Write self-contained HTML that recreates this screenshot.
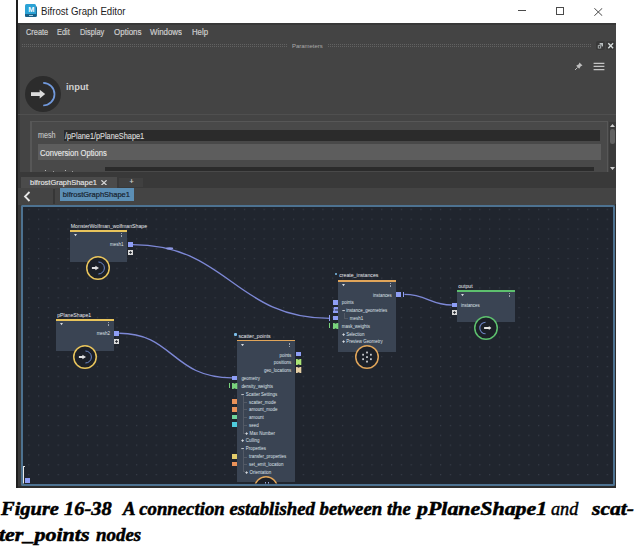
<!DOCTYPE html>
<html><head><meta charset="utf-8">
<style>
*{margin:0;padding:0;box-sizing:border-box}
html,body{width:635px;height:552px;overflow:hidden;background:#fff}
body{position:relative;font-family:"Liberation Sans",sans-serif}
.a{position:absolute}
.t{position:absolute;white-space:nowrap;line-height:1}
#win{position:absolute;left:16px;top:0;width:600px;height:488px;background:#1e1e1e}
#title{position:absolute;left:18px;top:0;width:598px;height:23px;background:#fff}
#body{position:absolute;left:18px;top:23px;width:598px;height:465px;background:#444}
.menu{color:#cdcdcd;font-size:8.4px;top:27.9px;transform:scaleX(0.88);transform-origin:0 0;-webkit-text-stroke:0.2px #cdcdcd}
.cap{font-family:"Liberation Serif",serif;font-weight:bold;font-style:italic;font-size:18px;color:#000;transform-origin:0 0;-webkit-text-stroke:0.5px #000}
</style></head><body>
<div id="win"></div>
<div id="title"></div>
<div id="body"></div>

<div class="a" style="left:18px;top:23px;width:598px;height:2px;background:#383838"></div>
<div class="a" style="left:18px;top:23px;width:1.5px;height:465px;background:#393939"></div>
<!-- title bar -->
<div class="a" style="left:25.5px;top:5.5px;width:11.5px;height:11.5px;background:#1e6e98;border-radius:1.5px"></div>
<div class="a" style="left:24.7px;top:4.4px;width:11.3px;height:9.6px;background:#2ba2d5;border-radius:1.5px 1.5px 0 0"></div>
<div class="a" style="left:24.7px;top:13.6px;width:11.3px;height:3.6px;background:#186088;border-radius:0 0 1px 1px"></div>
<div class="a" style="left:28.8px;top:15.1px;width:4px;height:0.9px;background:#a6cde0"></div>
<div class="t" style="left:28.2px;top:5.6px;font-size:7.4px;font-weight:bold;color:#f4fbff">M</div>
<div class="t" style="left:40.8px;top:7.2px;font-size:10.2px;color:#222;transform:scaleX(0.945);transform-origin:0 0">Bifrost Graph Editor</div>
<div class="a" style="left:517.6px;top:10px;width:8px;height:1px;background:#4a4a4a"></div>
<div class="a" style="left:555.5px;top:7px;width:8px;height:8px;border:1px solid #4a4a4a"></div>
<svg class="a" style="left:593.5px;top:7.5px" width="9" height="8"><path d="M0.3 0.2L8.3 7.8M8.3 0.2L0.3 7.8" stroke="#4a4a4a" stroke-width="1"/></svg>

<!-- menu -->
<div class="t menu" style="left:25.5px">Create</div>
<div class="t menu" style="left:56.5px">Edit</div>
<div class="t menu" style="left:79.5px">Display</div>
<div class="t menu" style="left:113.5px;transform:scaleX(0.955)">Options</div>
<div class="t menu" style="left:150.2px;transform:scaleX(0.94)">Windows</div>
<div class="t menu" style="left:192px;transform:scaleX(0.93)">Help</div>


<!-- parameters header -->
<svg class="a" style="left:22px;top:44px" width="594" height="4">
 <defs><pattern id="dp" width="2" height="2" patternUnits="userSpaceOnUse"><rect width="1" height="1" fill="#626262"/></pattern></defs>
 <rect x="0" y="0" width="266" height="4" fill="url(#dp)"/>
 <rect x="306" y="0" width="263" height="4" fill="url(#dp)"/>
</svg>
<div class="t" style="left:292px;top:42.5px;font-size:6.2px;color:#aaaaaa;transform:scaleX(0.96);transform-origin:0 0">Parameters</div>
<div class="a" style="left:595.7px;top:40.5px;width:9px;height:9.5px;background:#393939;border-radius:2px"></div>
<div class="a" style="left:605.7px;top:40.5px;width:9.3px;height:9.5px;background:#393939;border-radius:2px"></div>
<svg class="a" style="left:595.7px;top:40.5px" width="9" height="9.5"><rect x="3.6" y="2" width="3.4" height="3.4" fill="#b9bfc0"/><rect x="1.6" y="4" width="3.6" height="3.8" fill="#c4cacb" stroke="#393939" stroke-width="0.6"/><rect x="2.6" y="5" width="1.6" height="1.8" fill="#393939"/></svg>
<svg class="a" style="left:605.7px;top:40.5px" width="9.3" height="9.5"><path d="M2.3 2.2L7.1 7.2M7.1 2.2L2.3 7.2" stroke="#d8dede" stroke-width="1.3"/></svg>
<!-- pin & hamburger -->
<svg class="a" style="left:574px;top:61.2px" width="10" height="10"><path d="M5.5 1.5L8.5 4.5L6.8 5.2L5.2 7.8L2.2 4.8L4.8 3.2Z" fill="#bdbdbd"/><path d="M3.5 6.5L1 9" stroke="#bdbdbd" stroke-width="1"/></svg>
<svg class="a" style="left:593px;top:60px" width="13" height="12"><path d="M0.6 3.4H11.4M0.6 6.4H11.4M0.6 9.7H11.4" stroke="#c4c4c4" stroke-width="1.3"/></svg>
<!-- input circle -->
<div class="a" style="left:25.1px;top:75.7px;width:36px;height:36px;border-radius:50%;background:#2c2c2c"></div>
<svg class="a" style="left:25.1px;top:75.7px" width="36" height="36">
 <path d="M18.2 6.9 A11.3 11.3 0 0 1 18.2 29.5" stroke="#7199dc" stroke-width="1.7" fill="none"/>
 <path d="M6 18.1H15.6" stroke="#dcdcdc" stroke-width="3.8"/><path d="M14.7 13.7L20.2 18.1L14.7 22.5Z" fill="#dcdcdc"/>
</svg>
<div class="t" style="left:66px;top:83px;font-size:9.3px;font-weight:bold;color:#d0d0d0">input</div>
<div class="a" style="left:18px;top:114.2px;width:598px;height:1px;background:#4f4f4f"></div>
<!-- attribute box -->
<div class="a" style="left:29.6px;top:121px;width:578.4px;height:51px;border:1px solid #575757;border-left-width:2px;border-bottom:none;background:#494949"></div>
<div class="t" style="left:37.7px;top:131.8px;font-size:8.2px;color:#c2c2c2;transform:scaleX(0.878);transform-origin:0 0;-webkit-text-stroke:0.15px #c2c2c2">mesh</div>
<div class="a" style="left:64px;top:129.5px;width:536px;height:11.5px;background:#2b2b2b"></div>
<div class="t" style="left:65.4px;top:131.9px;font-size:8.4px;color:#dadada;transform:scaleX(0.876);transform-origin:0 0;-webkit-text-stroke:0.15px #dadada">/pPlane1/pPlaneShape1</div>
<div class="a" style="left:37.5px;top:143.5px;width:563px;height:16.5px;background:#5d5d5d"></div>
<div class="t" style="left:39.6px;top:148.5px;font-size:8.5px;color:#e6e6e6;transform:scaleX(0.894);transform-origin:0 0;-webkit-text-stroke:0.15px #e6e6e6">Conversion Options</div>
<div class="a" style="left:104.6px;top:167.2px;width:489px;height:4.3px;background:#2b2b2b"></div><div class="a" style="left:45.3px;top:170.4px;width:1.2px;height:1.1px;background:#b8b8b8"></div><div class="a" style="left:53px;top:170.6px;width:1px;height:0.9px;background:#9a9a9a"></div><div class="a" style="left:65.2px;top:170.4px;width:1.2px;height:1.1px;background:#b8b8b8"></div><div class="a" style="left:72.3px;top:170.6px;width:1px;height:0.9px;background:#9a9a9a"></div>
<div class="a" style="left:608.5px;top:122px;width:7px;height:50px;background:#3a3a3a"></div>
<div class="a" style="left:609.5px;top:129px;width:5px;height:15px;background:#626262;border-radius:2.5px"></div>
<svg class="a" style="left:608.5px;top:122px" width="7" height="50"><path d="M1 5L3.5 2L6 5Z M1 45L3.5 48L6 45Z" fill="#cfcfcf"/></svg>
<!-- tab bar -->
<div class="a" style="left:18px;top:171.5px;width:598px;height:16px;background:#393939"></div>
<div class="a" style="left:21px;top:176.5px;width:96px;height:11px;background:#4b4b4b"></div>
<div class="t" style="left:29.5px;top:178.8px;font-size:7.8px;color:#e4e4e4;transform:scaleX(0.96);transform-origin:0 0;-webkit-text-stroke:0.15px #e4e4e4">bifrostGraphShape1</div>
<svg class="a" style="left:101.3px;top:179.9px" width="6" height="5.5"><path d="M0.4 0.3L5.6 5.2M5.6 0.3L0.4 5.2" stroke="#d8d8d8" stroke-width="1.2"/></svg>
<div class="a" style="left:119px;top:177.5px;width:24px;height:9.5px;background:#404040"></div>
<div class="t" style="left:129.6px;top:178.4px;font-size:7px;color:#d0d0d0;-webkit-text-stroke:0.2px #d0d0d0">+</div>
<!-- breadcrumb -->
<div class="a" style="left:18px;top:188px;width:598px;height:17px;background:#444"></div>
<svg class="a" style="left:23px;top:191px" width="8" height="11"><path d="M6.5 1L2 5.5L6.5 10" stroke="#e8e8e8" stroke-width="1.8" fill="none"/></svg>
<div class="a" style="left:53px;top:189px;width:1.5px;height:15px;background:#363636"></div>
<div class="a" style="left:60px;top:188.3px;width:74px;height:12.5px;background:#5c8fb5"></div>
<div class="t" style="left:62.8px;top:191.3px;font-size:7.5px;color:#17222e;-webkit-text-stroke:0.2px #17222e">bifrostGraphShape1</div>


<!-- graph -->
<div class="a" style="left:18px;top:204.5px;width:598px;height:283.2px;background:#393939"></div>
<div class="a" style="left:21px;top:205px;width:594px;height:281px;border:2px solid #4d7291;border-radius:2px;background:#20252e"></div>
<svg class="a" style="left:0;top:0" width="635" height="552">
 <defs><pattern id="gd" x="28.2" y="208.8" width="9.805" height="9.823" patternUnits="userSpaceOnUse"><rect width="1.2" height="1.2" fill="#363c48"/></pattern></defs>
 <rect x="22" y="206.5" width="591" height="277" fill="url(#gd)"/>
 <path d="M132.5 244.6 C227.5 244.6 235 318.4 330 318.4" stroke="#7d88d6" stroke-width="1.35" fill="none"/>
 <ellipse cx="169.6" cy="248.4" rx="3.6" ry="1.1" fill="#8d97e2"/>
 <path d="M119.3 333.2 C173.3 333.2 172 377.8 232 377.8" stroke="#7d88d6" stroke-width="1.35" fill="none"/>
 <path d="M404.4 294.4 C426.4 294.4 430.8 305 451.8 305" stroke="#7d88d6" stroke-width="1.4" fill="none"/>
</svg>


<div class="a" style="left:0;top:0;width:635px;height:552px;clip-path:inset(0 0 68.5px 0)">
<div class="t" style="left:70.80px;top:223.78px;font-size:5.2px;color:#e8eaee;">MonsterWolfman_wolfmanShape</div>
<div class="a" style="left:69.60px;top:229.90px;width:57.40px;height:1.70px;background:#e8c45c;"></div>
<div class="a" style="left:69.60px;top:231.60px;width:57.40px;height:30.70px;background:#3a4453;"></div>
<svg class="a" style="left:73.80px;top:234.30px" width="3" height="2.5"><path d="M0 0H3L1.5 2.3Z" fill="#d4d8de"/></svg>
<div class="a" style="left:121.10px;top:233.00px;width:1.10px;height:1.10px;background:#9ea4ad;"></div>
<div class="a" style="left:121.10px;top:234.60px;width:1.10px;height:1.10px;background:#9ea4ad;"></div>
<div class="a" style="left:121.10px;top:236.20px;width:1.10px;height:1.10px;background:#9ea4ad;"></div>
<div class="t" style="right:511.60px;top:243.42px;font-size:4.45px;color:#dfe3ea;">mesh1</div>
<div class="a" style="left:127.70px;top:242.10px;width:5.00px;height:4.80px;background:#8e9ef5;"></div>
<svg class="a" style="left:127.90px;top:249.80px" width="5" height="5"><rect x="0" y="0" width="5" height="5" fill="#d9d9d9"/><path d="M2.5 1.2V3.8M1.2 2.5H3.8" stroke="#262a31" stroke-width="1.1"/></svg>
<svg class="a" style="left:85.40px;top:255.00px" width="26.00" height="26.00" viewBox="-13 -13 26 26"><circle cx="0" cy="0" r="11.25" fill="#1c2028" stroke="#e8c45c" stroke-width="1.5"/><path d="M0.4 -6A6 6 0 0 1 0.4 6" stroke="#6a86c8" stroke-width="1" fill="none"/><path d="M-6.1 0H-2" stroke="#e0e0e0" stroke-width="1.9"/><path d="M-2.6 -2.3L1 0L-2.6 2.3Z" fill="#e0e0e0"/></svg>
<div class="t" style="left:57.20px;top:313.08px;font-size:5.2px;color:#e8eaee;">pPlaneShape1</div>
<div class="a" style="left:56.00px;top:318.90px;width:57.50px;height:1.70px;background:#e8c45c;"></div>
<div class="a" style="left:56.00px;top:320.60px;width:57.50px;height:30.40px;background:#3a4453;"></div>
<svg class="a" style="left:60.20px;top:323.30px" width="3" height="2.5"><path d="M0 0H3L1.5 2.3Z" fill="#d4d8de"/></svg>
<div class="a" style="left:107.60px;top:322.00px;width:1.10px;height:1.10px;background:#9ea4ad;"></div>
<div class="a" style="left:107.60px;top:323.60px;width:1.10px;height:1.10px;background:#9ea4ad;"></div>
<div class="a" style="left:107.60px;top:325.20px;width:1.10px;height:1.10px;background:#9ea4ad;"></div>
<div class="t" style="right:525.00px;top:332.32px;font-size:4.45px;color:#dfe3ea;">mesh2</div>
<div class="a" style="left:114.20px;top:331.00px;width:5.00px;height:4.80px;background:#8e9ef5;"></div>
<svg class="a" style="left:114.30px;top:338.80px" width="5" height="5"><rect x="0" y="0" width="5" height="5" fill="#d9d9d9"/><path d="M2.5 1.2V3.8M1.2 2.5H3.8" stroke="#262a31" stroke-width="1.1"/></svg>
<svg class="a" style="left:71.80px;top:343.70px" width="26.00" height="26.00" viewBox="-13 -13 26 26"><circle cx="0" cy="0" r="11.25" fill="#1c2028" stroke="#e8c45c" stroke-width="1.5"/><path d="M0.4 -6A6 6 0 0 1 0.4 6" stroke="#6a86c8" stroke-width="1" fill="none"/><path d="M-6.1 0H-2" stroke="#e0e0e0" stroke-width="1.9"/><path d="M-2.6 -2.3L1 0L-2.6 2.3Z" fill="#e0e0e0"/></svg>
<div class="a" style="left:335.20px;top:272.90px;width:2.2px;height:2.2px;border-radius:50%;background:#7cc0ec"></div>
<div class="t" style="left:339.20px;top:273.28px;font-size:5.2px;color:#e8eaee;">create_instances</div>
<div class="a" style="left:338.00px;top:279.90px;width:57.70px;height:1.70px;background:#e0a55a;"></div>
<div class="a" style="left:338.00px;top:281.60px;width:57.70px;height:70.10px;background:#3a4453;"></div>
<svg class="a" style="left:342.20px;top:284.30px" width="3" height="2.5"><path d="M0 0H3L1.5 2.3Z" fill="#d4d8de"/></svg>
<div class="a" style="left:389.80px;top:283.00px;width:1.10px;height:1.10px;background:#9ea4ad;"></div>
<div class="a" style="left:389.80px;top:284.60px;width:1.10px;height:1.10px;background:#9ea4ad;"></div>
<div class="a" style="left:389.80px;top:286.20px;width:1.10px;height:1.10px;background:#9ea4ad;"></div>
<div class="t" style="right:243.20px;top:293.52px;font-size:4.45px;color:#dfe3ea;">instances</div>
<div class="a" style="left:396.20px;top:292.30px;width:5.00px;height:4.80px;background:#8e9ef5;"></div>
<div class="a" style="left:403.30px;top:292.30px;width:0.90px;height:4.80px;background:#8e9ef5;"></div>
<div class="t" style="left:341.80px;top:301.12px;font-size:4.45px;color:#dfe3ea;">points</div>
<div class="a" style="left:332.60px;top:299.90px;width:5.00px;height:4.80px;background:#8e9ef5;"></div>
<svg class="a" style="left:341.80px;top:309.15px" width="3.2" height="3.2"><path d="M0.3 1.6H2.9" stroke="#d6dae0" stroke-width="0.9"/></svg>
<div class="t" style="left:346.20px;top:309.12px;font-size:4.45px;color:#dfe3ea;">instance_geometries</div>
<svg class="a" style="left:332.60px;top:307.10px" width="6" height="6"><path d="M1 0H5V2.4H1.8V3.6H5V6H0V3.6H1V2.4H0Z" fill="#8e9ef5"/></svg>
<div class="a" style="left:344.00px;top:312.50px;width:0.50px;height:6.00px;background:#535a66;"></div>
<div class="a" style="left:344.00px;top:318.00px;width:3.50px;height:0.50px;background:#535a66;"></div>
<div class="t" style="left:349.80px;top:316.92px;font-size:4.45px;color:#dfe3ea;">mesh1</div>
<div class="a" style="left:332.60px;top:315.60px;width:5.00px;height:4.80px;background:#8e9ef5;"></div>
<div class="a" style="left:329.40px;top:315.40px;width:0.90px;height:5.20px;background:#8e9ef5;"></div>
<div class="t" style="left:341.80px;top:324.82px;font-size:4.45px;color:#dfe3ea;">mask_weights</div>
<svg class="a" style="left:332.60px;top:322.60px" width="6" height="6.2"><path d="M0 0H1.2L2.6 0.8L4 0H5.3V6H4L2.6 5.2L1.2 6H0Z" fill="#79d27c"/></svg>
<div class="a" style="left:329.40px;top:322.80px;width:0.90px;height:5.40px;background:#79d27c;"></div>
<svg class="a" style="left:341.80px;top:332.65px" width="3.2" height="3.2"><path d="M1.6 0.3V2.9M0.3 1.6H2.9" stroke="#d6dae0" stroke-width="0.9"/></svg>
<div class="t" style="left:346.20px;top:332.62px;font-size:4.45px;color:#dfe3ea;">Selection</div>
<svg class="a" style="left:341.80px;top:340.15px" width="3.2" height="3.2"><path d="M1.6 0.3V2.9M0.3 1.6H2.9" stroke="#d6dae0" stroke-width="0.9"/></svg>
<div class="t" style="left:346.20px;top:340.12px;font-size:4.45px;color:#dfe3ea;">Preview Geometry</div>
<svg class="a" style="left:353.80px;top:344.40px" width="26.00" height="26.00" viewBox="-13 -13 26 26"><circle cx="0" cy="0" r="11.25" fill="#1c2028" stroke="#e0a55a" stroke-width="1.5"/><rect x="-0.90" y="-5.40" width="1.8" height="1.8" fill="#c6c8cc"/><rect x="-4.80" y="-3.20" width="1.8" height="1.8" fill="#c6c8cc"/><rect x="3.00" y="-3.20" width="1.8" height="1.8" fill="#c6c8cc"/><rect x="-0.90" y="-0.80" width="1.8" height="1.8" fill="#c6c8cc"/><rect x="-4.80" y="1.30" width="1.8" height="1.8" fill="#c6c8cc"/><rect x="3.00" y="1.30" width="1.8" height="1.8" fill="#c6c8cc"/><rect x="-0.90" y="3.70" width="1.8" height="1.8" fill="#c6c8cc"/></svg>
<div class="t" style="left:458.20px;top:283.78px;font-size:5.2px;color:#e8eaee;">output</div>
<div class="a" style="left:457.00px;top:289.90px;width:57.80px;height:1.70px;background:#5dc06e;"></div>
<div class="a" style="left:457.00px;top:291.60px;width:57.80px;height:30.90px;background:#3a4453;"></div>
<svg class="a" style="left:461.20px;top:294.30px" width="3" height="2.5"><path d="M0 0H3L1.5 2.3Z" fill="#d4d8de"/></svg>
<div class="a" style="left:508.90px;top:293.00px;width:1.10px;height:1.10px;background:#9ea4ad;"></div>
<div class="a" style="left:508.90px;top:294.60px;width:1.10px;height:1.10px;background:#9ea4ad;"></div>
<div class="a" style="left:508.90px;top:296.20px;width:1.10px;height:1.10px;background:#9ea4ad;"></div>
<div class="t" style="left:461.00px;top:304.02px;font-size:4.45px;color:#dfe3ea;">instances</div>
<div class="a" style="left:451.80px;top:302.60px;width:5.00px;height:4.80px;background:#8e9ef5;"></div>
<svg class="a" style="left:451.90px;top:310.20px" width="5" height="5"><rect x="0" y="0" width="5" height="5" fill="#d9d9d9"/><path d="M2.5 1.2V3.8M1.2 2.5H3.8" stroke="#262a31" stroke-width="1.1"/></svg>
<svg class="a" style="left:472.90px;top:315.45px" width="26.00" height="26.00" viewBox="-13 -13 26 26"><circle cx="0" cy="0" r="11.25" fill="#1c2028" stroke="#5dc06e" stroke-width="1.5"/><path d="M-0.4 -5.8A5.8 5.8 0 0 0 -0.4 5.8" stroke="#6a80c0" stroke-width="1.1" fill="none"/><path d="M-1.9 0H3.2" stroke="#e4e4e4" stroke-width="2"/><path d="M2.8 -2L5.4 0L2.8 2Z" fill="#e4e4e4"/></svg>
<div class="a" style="left:234.40px;top:333.40px;width:2.2px;height:2.2px;border-radius:50%;background:#7cc0ec"></div>
<div class="t" style="left:238.40px;top:333.78px;font-size:5.2px;color:#e8eaee;">scatter_points</div>
<div class="a" style="left:237.20px;top:339.50px;width:57.70px;height:1.70px;background:#e0a55a;"></div>
<div class="a" style="left:237.20px;top:341.20px;width:57.70px;height:140.40px;background:#3a4453;"></div>
<svg class="a" style="left:241.40px;top:343.90px" width="3" height="2.5"><path d="M0 0H3L1.5 2.3Z" fill="#d4d8de"/></svg>
<div class="a" style="left:289.00px;top:342.60px;width:1.10px;height:1.10px;background:#9ea4ad;"></div>
<div class="a" style="left:289.00px;top:344.20px;width:1.10px;height:1.10px;background:#9ea4ad;"></div>
<div class="a" style="left:289.00px;top:345.80px;width:1.10px;height:1.10px;background:#9ea4ad;"></div>
<div class="t" style="right:343.70px;top:353.72px;font-size:4.45px;color:#dfe3ea;">points</div>
<div class="a" style="left:295.90px;top:351.60px;width:5.00px;height:4.80px;background:#8e9ef5;"></div>
<div class="t" style="right:343.70px;top:361.42px;font-size:4.45px;color:#dfe3ea;">positions</div>
<svg class="a" style="left:295.50px;top:358.90px" width="6" height="6.2"><path d="M0 0H1.2L2.6 0.8L4 0H5.3V6H4L2.6 5.2L1.2 6H0Z" fill="#a9e475"/></svg>
<div class="t" style="right:343.70px;top:369.12px;font-size:4.45px;color:#dfe3ea;">geo_locations</div>
<svg class="a" style="left:295.50px;top:366.90px" width="6" height="6.2"><path d="M0 0H1.2L2.6 0.8L4 0H5.3V6H4L2.6 5.2L1.2 6H0Z" fill="#e6cfa4"/></svg>
<div class="t" style="left:241.40px;top:376.72px;font-size:4.45px;color:#dfe3ea;">geometry</div>
<div class="a" style="left:231.90px;top:375.50px;width:5.00px;height:4.80px;background:#8e9ef5;"></div>
<div class="t" style="left:241.40px;top:384.92px;font-size:4.45px;color:#dfe3ea;">density_weights</div>
<svg class="a" style="left:231.90px;top:382.90px" width="6" height="6.2"><path d="M0 0H1.2L2.6 0.8L4 0H5.3V6H4L2.6 5.2L1.2 6H0Z" fill="#79d27c"/></svg>
<div class="a" style="left:229.00px;top:383.10px;width:0.90px;height:5.40px;background:#79d27c;"></div>
<svg class="a" style="left:241.40px;top:392.55px" width="3.2" height="3.2"><path d="M0.3 1.6H2.9" stroke="#d6dae0" stroke-width="0.9"/></svg>
<div class="t" style="left:245.80px;top:392.52px;font-size:4.45px;color:#dfe3ea;">Scatter Settings</div>
<div class="a" style="left:243.30px;top:395.80px;width:0.60px;height:37.20px;background:#535a66;"></div>
<div class="a" style="left:243.30px;top:449.80px;width:0.60px;height:21.60px;background:#535a66;"></div>
<div class="a" style="left:243.30px;top:433.00px;width:2.00px;height:0.60px;background:#535a66;"></div>
<div class="a" style="left:243.30px;top:471.30px;width:2.00px;height:0.60px;background:#535a66;"></div>
<div class="a" style="left:243.30px;top:401.80px;width:3.50px;height:0.60px;background:#535a66;"></div>
<div class="t" style="left:249.00px;top:400.52px;font-size:4.45px;color:#dfe3ea;">scatter_mode</div>
<div class="a" style="left:231.90px;top:399.30px;width:5.00px;height:4.80px;background:#ea9259;"></div>
<div class="a" style="left:243.30px;top:409.40px;width:3.50px;height:0.60px;background:#535a66;"></div>
<div class="t" style="left:249.00px;top:408.12px;font-size:4.45px;color:#dfe3ea;">amount_mode</div>
<div class="a" style="left:231.90px;top:406.90px;width:5.00px;height:4.80px;background:#ea9259;"></div>
<div class="a" style="left:243.30px;top:417.20px;width:3.50px;height:0.60px;background:#535a66;"></div>
<div class="t" style="left:249.00px;top:415.92px;font-size:4.45px;color:#dfe3ea;">amount</div>
<div class="a" style="left:231.90px;top:414.70px;width:5.00px;height:4.80px;background:#6ed39b;"></div>
<div class="a" style="left:243.30px;top:424.90px;width:3.50px;height:0.60px;background:#535a66;"></div>
<div class="t" style="left:249.00px;top:423.62px;font-size:4.45px;color:#dfe3ea;">seed</div>
<div class="a" style="left:231.90px;top:422.40px;width:5.00px;height:4.80px;background:#4fcbdc;"></div>
<svg class="a" style="left:245.20px;top:431.75px" width="3.2" height="3.2"><path d="M1.6 0.3V2.9M0.3 1.6H2.9" stroke="#d6dae0" stroke-width="0.9"/></svg>
<div class="t" style="left:249.60px;top:431.72px;font-size:4.45px;color:#dfe3ea;">Max Number</div>
<svg class="a" style="left:241.40px;top:439.45px" width="3.2" height="3.2"><path d="M1.6 0.3V2.9M0.3 1.6H2.9" stroke="#d6dae0" stroke-width="0.9"/></svg>
<div class="t" style="left:245.80px;top:439.42px;font-size:4.45px;color:#dfe3ea;">Culling</div>
<svg class="a" style="left:241.40px;top:447.15px" width="3.2" height="3.2"><path d="M0.3 1.6H2.9" stroke="#d6dae0" stroke-width="0.9"/></svg>
<div class="t" style="left:245.80px;top:447.12px;font-size:4.45px;color:#dfe3ea;">Properties</div>
<div class="a" style="left:243.30px;top:456.60px;width:3.50px;height:0.60px;background:#535a66;"></div>
<div class="t" style="left:249.00px;top:455.32px;font-size:4.45px;color:#dfe3ea;">transfer_properties</div>
<div class="a" style="left:231.90px;top:454.10px;width:5.00px;height:4.80px;background:#e3cc6a;"></div>
<div class="a" style="left:243.30px;top:464.20px;width:3.50px;height:0.60px;background:#535a66;"></div>
<div class="t" style="left:249.00px;top:462.92px;font-size:4.45px;color:#dfe3ea;">set_emit_location</div>
<div class="a" style="left:231.90px;top:461.70px;width:5.00px;height:4.80px;background:#ea9259;"></div>
<svg class="a" style="left:245.20px;top:470.75px" width="3.2" height="3.2"><path d="M1.6 0.3V2.9M0.3 1.6H2.9" stroke="#d6dae0" stroke-width="0.9"/></svg>
<div class="t" style="left:249.60px;top:470.72px;font-size:4.45px;color:#dfe3ea;">Orientation</div>
<svg class="a" style="left:253.30px;top:475.00px" width="26.00" height="26.00" viewBox="-13 -13 26 26"><circle cx="0" cy="0" r="11.25" fill="#1c2028" stroke="#e0a55a" stroke-width="1.5"/></svg>
<div class="a" style="left:264.60px;top:482.40px;width:1.40px;height:1.30px;background:#9aa6d8;"></div>
<div class="a" style="left:268.00px;top:482.40px;width:1.40px;height:1.30px;background:#9aa6d8;"></div>
<div class="a" style="left:22.80px;top:466.00px;width:1.30px;height:17.80px;background:#e8e8e8;"></div>
<div class="a" style="left:22.80px;top:466.00px;width:2.00px;height:1.00px;background:#e8e8e8;"></div>
<div class="a" style="left:24.60px;top:477.80px;width:5.20px;height:5.40px;background:#8e9ef5;"></div></div>
<!-- graph border overlay -->
<div class="a" style="left:18px;top:486px;width:598px;height:2px;background:#2c2c2c"></div>
<div class="a" style="left:615px;top:204px;width:1px;height:284px;background:#2c2c2c"></div>
<div class="a" style="left:21px;top:205px;width:594px;height:281px;border:2px solid #4d7291;border-radius:2px"></div>
<!-- caption -->
<div class="t cap" style="left:0.6px;top:500px;transform:scaleX(1.136)">Figure 16-38</div>
<div class="t cap" style="left:123px;top:500px;transform:scaleX(1.043)">A connection established between the</div>
<div class="t cap" style="left:416.8px;top:500px;transform:scaleX(1.217)">pPlaneShape1</div>
<div class="t cap" style="left:550.7px;top:500px;transform:scaleX(1.01);font-weight:normal;-webkit-text-stroke:0.45px #000">and</div>
<div class="t cap" style="left:591.8px;top:500px;transform:scaleX(1.197)">scat-</div>
<div class="t cap" style="left:-1.2px;top:525.9px;transform:scaleX(1.222)">ter_points</div>
<div class="t cap" style="left:95.7px;top:525.9px;transform:scaleX(1.05)">nodes</div>
</body></html>
